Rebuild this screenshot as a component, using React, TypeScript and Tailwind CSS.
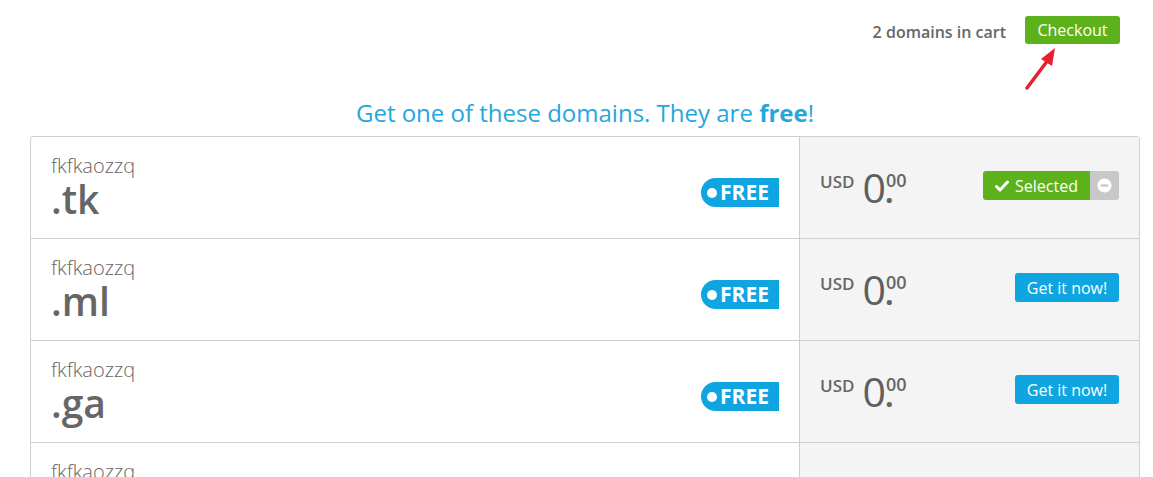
import React from "react";

const font = { fontFamily: '"Open Sans", "Noto Sans", sans-serif' };

function Price() {
  return (
    <div className="flex items-start text-[#666]">
      <span className="mt-[2px] text-[17px] font-semibold leading-none">USD</span>
      <span className="ml-[8px] text-[41px] leading-none font-normal text-[#5f5f5f] -mt-[4px]">0</span>
      <span className="flex flex-col">
        <span className="text-[18px] font-semibold leading-[18px]">00</span>
        <span className="text-[30px] font-bold leading-[6px] -ml-[1px]">.</span>
      </span>
    </div>
  );
}

function FreeBadge() {
  return (
    <div className="flex items-center h-[29px] w-[78px] bg-[#0ea5e1] rounded-l-full rounded-r-[3px] pl-[6px]">
      <span className="w-[10px] h-[10px] rounded-full bg-white" />
      <span className="ml-[3px] text-white text-[21px] font-bold leading-none">FREE</span>
    </div>
  );
}

function Row({ tld, selected, last }: { tld: string; selected?: boolean; last?: boolean }) {
  return (
    <div className={`flex h-[102px] ${last ? "" : "border-b border-[#cfcfcf]"}`}>
      <div className="flex-1 flex justify-between pl-[20px] pr-[20px]">
        <div className="flex flex-col pt-[17px]">
          <span className="text-[20px] font-light text-[#666] leading-[24px]">fkfkaozzq</span>
          {!last && <span className="text-[39px] font-semibold text-[#666] leading-[42px]">{tld}</span>}
        </div>
        {!last && (
          <div className="pt-[41px]">
            <FreeBadge />
          </div>
        )}
      </div>
      <div className="w-[340px] bg-[#f4f4f4] border-l border-[#cfcfcf] flex justify-between pl-[20px] pr-[20px] pt-[34px]">
        {!last && <Price />}
        {!last &&
          (selected ? (
            <div className="flex h-[29px] rounded-[3px] overflow-hidden">
              <div className="flex items-center bg-[#5db21c] w-[107px] justify-center text-white text-[16px] font-normal">
                <svg width="14" height="12" viewBox="0 0 14 12" className="mr-[6px]">
                  <path d="M1.5 6.5 L5 10 L12.5 2" stroke="#fff" strokeWidth="3" fill="none" strokeLinecap="round" strokeLinejoin="round" />
                </svg>
                Selected
              </div>
              <div className="flex items-center justify-center bg-[#c8c8c8] w-[29px]">
                <svg width="15" height="15" viewBox="0 0 16 16">
                  <circle cx="8" cy="8" r="7.5" fill="#fff" />
                  <rect x="4" y="6.8" width="8" height="2.4" fill="#c8c8c8" />
                </svg>
              </div>
            </div>
          ) : (
            <div className="flex items-center justify-center h-[29px] w-[104px] rounded-[3px] bg-[#0ea5e1] text-white text-[16px]">
              Get it now!
            </div>
          ))}
      </div>
    </div>
  );
}

export default function App() {
  return (
    <div className="w-[1153px] h-[477px] bg-white overflow-hidden relative" style={font}>
      <div className="flex justify-end items-center pt-[16px] pr-[33px]">
        <span className="text-[16px] font-semibold text-[#666] mt-[4px]">2 domains in cart</span>
        <div className="ml-[19px] flex items-center justify-center h-[28px] w-[95px] rounded-[3px] bg-[#5db21c] text-white text-[16px]">
          Checkout
        </div>
      </div>
      <svg className="absolute left-[1020px] top-[42px]" width="45" height="52" viewBox="0 0 45 52">
        <line x1="7" y1="46" x2="28" y2="18" stroke="#e5212c" strokeWidth="3.5" strokeLinecap="round" />
        <polygon points="35,6 21,17 32,24" fill="#e5212c" />
      </svg>
      <div className="ml-[30px] w-[1110px]">
        <div className="text-center text-[24px] text-[#25a7dc] mt-[53px] leading-[32px]">
          Get one of these domains. They are <span className="font-bold">free</span>!
        </div>
        <div className="mt-[7px] border border-[#cfcfcf] rounded-t-[3px]">
          <Row tld=".tk" selected />
          <Row tld=".ml" />
          <Row tld=".ga" />
          <Row tld="" last />
        </div>
      </div>
    </div>
  );
}
